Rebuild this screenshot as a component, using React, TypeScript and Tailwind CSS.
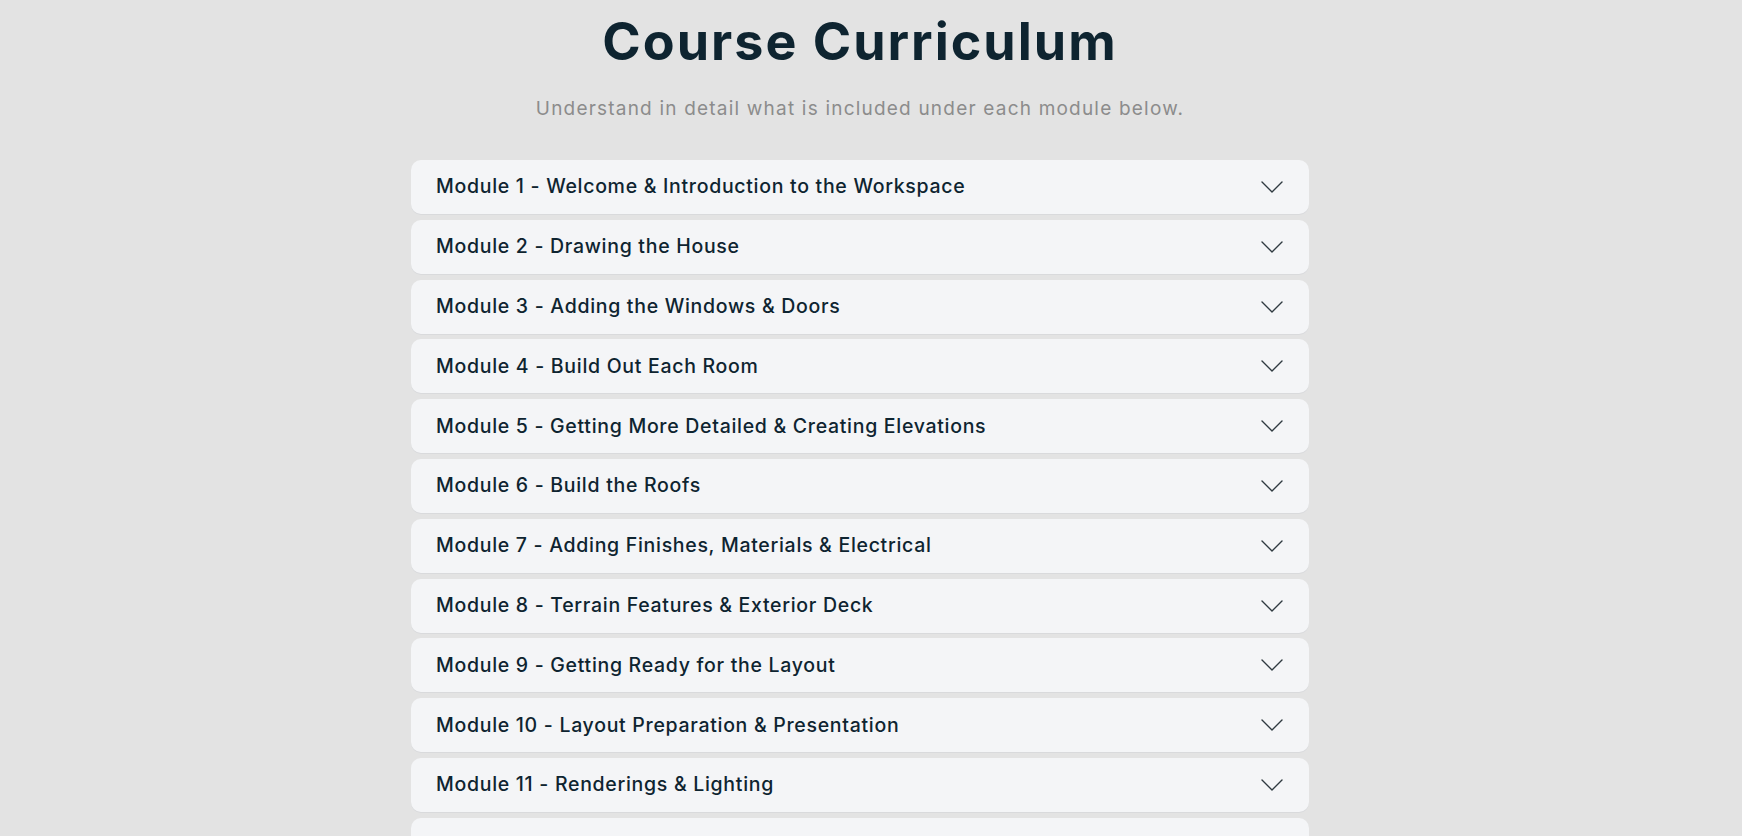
import React, { useState } from 'react';

const MODULES = [
  'Module 1 - Welcome & Introduction to the Workspace',
  'Module 2 - Drawing the House',
  'Module 3 - Adding the Windows & Doors',
  'Module 4 - Build Out Each Room',
  'Module 5 - Getting More Detailed & Creating Elevations',
  'Module 6 - Build the Roofs',
  'Module 7 - Adding Finishes, Materials & Electrical',
  'Module 8 - Terrain Features & Exterior Deck',
  'Module 9 - Getting Ready for the Layout',
  'Module 10 - Layout Preparation & Presentation',
  'Module 11 - Renderings & Lighting',
  'Module 12 - Final Review & Next Steps',
];

const Chevron = () => (
  <svg width="22" height="12" viewBox="0 0 22 12" fill="none" className="shrink-0">
    <path d="M1 1l10 10L21 1" stroke="#2f3a40" strokeWidth="1.4" strokeLinecap="round" strokeLinejoin="round" />
  </svg>
);

export default function App() {
  const [open, setOpen] = useState<number | null>(null);

  return (
    <div className="min-h-screen bg-[#e3e3e3] pr-[22px] font-['Inter',sans-serif]">
      <div className="mx-auto flex w-[898px] flex-col items-center">
        <h1 className="mt-[14px] text-[52px] font-bold leading-[56px] tracking-[2px] text-[#0e2430]">
          Course Curriculum
        </h1>
        <p className="mt-[27px] text-[19px] leading-[24px] tracking-[1.2px] text-[#8c8c8c]">
          Understand in detail what is included under each module below.
        </p>

        {/* Module list */}
        <div className="mt-[39px] flex w-full flex-col gap-[5.8px]">
          {MODULES.map((title, i) => (
            <div key={i} className="rounded-[10px] bg-[#f4f5f7] shadow-[0_1px_0_#d9dadc]">
              <button
                onClick={() => setOpen(open === i ? null : i)}
                className="flex h-[54px] w-full items-center justify-between pl-[25px] pr-[26px] text-left"
              >
                <span className="text-[19.5px] font-medium tracking-[0.7px] text-[#0e2430]">{title}</span>
                <Chevron />
              </button>
            </div>
          ))}
        </div>
      </div>
    </div>
  );
}
